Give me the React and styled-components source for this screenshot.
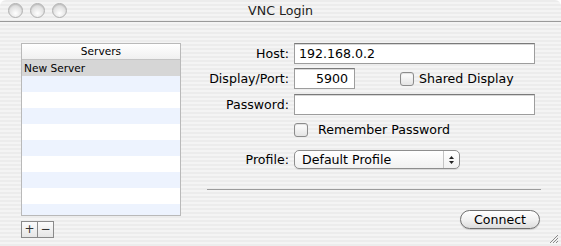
import React from 'react';
import styled, { createGlobalStyle } from 'styled-components';

const GlobalStyle = createGlobalStyle`
  html, body {
    margin: 0;
    padding: 0;
    background: #ffffff;
  }
  body {
    font-family: "DejaVu Sans", "Liberation Sans", sans-serif;
    color: #000;
  }
`;

const pinstripe = `repeating-linear-gradient(
  to bottom,
  #ececec 0px,
  #ececec 2px,
  #f4f4f4 2px,
  #f4f4f4 4px
)`;

const Window = styled.div`
  width: 561px;
  height: 246px;
  display: flex;
  flex-direction: column;
  border-radius: 6px 6px 0 0;
  overflow: hidden;
  background: ${pinstripe};
  position: relative;
`;

const TitleBar = styled.div`
  height: 21px;
  border-bottom: 1px solid #9a9a9a;
  display: flex;
  align-items: center;
  position: relative;
`;

const Lights = styled.div`
  display: flex;
  gap: 7px;
  padding-left: 8px;
`;

const Light = styled.span`
  width: 13px;
  height: 13px;
  border-radius: 50%;
  border: 1px solid #b0b0b0;
  background: radial-gradient(circle at 50% 72%, #ffffff 0%, #e8e8e8 45%, #cdcdcd 100%);
  box-shadow: inset 0 1px 1px rgba(0, 0, 0, 0.12);
`;

const Title = styled.div`
  position: absolute;
  left: 0;
  right: 0;
  text-align: center;
  font-size: 12.6px;
  color: #222;
`;

const Body = styled.div`
  flex: 1;
  display: flex;
  padding: 21px 20px 0 21px;
  gap: 26px;
`;

const LeftColumn = styled.div`
  width: 160px;
  display: flex;
  flex-direction: column;
  gap: 5px;
`;

const Table = styled.div`
  height: 171px;
  border: 1px solid #b9b9b9;
  background: #fff;
  display: flex;
  flex-direction: column;
  overflow: hidden;
`;

const TableHeader = styled.div`
  height: 15px;
  border-bottom: 1px solid #c4c4c4;
  background: linear-gradient(to bottom, #ffffff, #f0f0f0);
  font-size: 10.6px;
  text-align: center;
  line-height: 15px;
`;

const TableRow = styled.div`
  height: 16px;
  flex-shrink: 0;
  font-size: 10.6px;
  line-height: 16px;
  padding-left: 2px;
  background: ${(p) => (p.$selected ? '#d6d6d6' : p.$odd ? '#edf3fe' : '#ffffff')};
`;

const SmallButtons = styled.div`
  display: flex;
`;

const SmallButton = styled.div`
  width: 15px;
  height: 15px;
  border: 1px solid #8a8a8a;
  margin-left: ${(p) => (p.$first ? '0' : '-1px')};
  background: linear-gradient(to bottom, #fbfbfb, #e6e6e6);
  font-size: 12px;
  line-height: 14px;
  text-align: center;
  color: #333;
`;

const RightColumn = styled.div`
  flex: 1;
  display: flex;
  flex-direction: column;
`;

const Row = styled.div`
  display: flex;
  align-items: center;
  margin-top: ${(p) => p.$mt || 0}px;
`;

const Label = styled.label`
  width: 82px;
  margin-right: 5px;
  text-align: right;
  font-size: 12.6px;
  white-space: nowrap;
`;

const TextField = styled.div`
  box-sizing: border-box;
  width: ${(p) => p.$w}px;
  height: 21px;
  border: 1px solid #9d9d9d;
  border-top-color: #7a7a7a;
  background: #fff;
  font-size: 12.6px;
  line-height: 19px;
  padding: 0 6px 0 4px;
  text-align: ${(p) => p.$align || 'left'};
  box-shadow: inset 0 1px 0 #d8d8d8;
`;

const CheckGroup = styled.div`
  display: flex;
  align-items: center;
  gap: ${(p) => p.$gap}px;
  margin-left: ${(p) => p.$ml || 0}px;
  font-size: 12.6px;
`;

const Checkbox = styled.span`
  box-sizing: border-box;
  width: 14px;
  height: 14px;
  border: 1px solid #8c8c8c;
  border-radius: 3px;
  background: linear-gradient(to bottom, #ffffff, #e4e4e4);
  box-shadow: inset 0 1px 1px rgba(0, 0, 0, 0.12);
`;

const Popup = styled.div`
  box-sizing: border-box;
  width: 166px;
  height: 19px;
  border: 1px solid #8e8e8e;
  border-radius: 5px;
  background: linear-gradient(to bottom, #ffffff, #f1f1f1);
  display: flex;
  align-items: center;
  font-size: 12.6px;
  box-shadow: 0 1px 0 rgba(0, 0, 0, 0.08);
`;

const PopupText = styled.span`
  flex: 1;
  padding-left: 7px;
`;

const PopupArrows = styled.span`
  width: 15px;
  height: 100%;
  border-left: 1px solid #c4c4c4;
  display: flex;
  flex-direction: column;
  align-items: center;
  justify-content: center;
  gap: 2px;
`;

const Separator = styled.div`
  height: 1px;
  background: #9c9c9c;
  margin-top: 20px;
`;

const Footer = styled.div`
  display: flex;
  justify-content: flex-end;
  margin-top: 20px;
  padding-right: 1px;
`;

const PillButton = styled.div`
  box-sizing: border-box;
  width: 80px;
  height: 19px;
  border: 1px solid #6f6f6f;
  border-radius: 10px;
  background: linear-gradient(to bottom, #ffffff 0%, #f2f2f2 50%, #dcdcdc 100%);
  font-size: 12.6px;
  line-height: 17px;
  text-align: center;
  box-shadow: 0 1px 1px rgba(0, 0, 0, 0.15);
`;

const Grip = styled.svg`
  position: absolute;
  right: 2px;
  bottom: 2px;
`;

const rows = Array.from({ length: 10 }, (_, i) => i);

export default function App() {
  return (
    <>
      <GlobalStyle />
      <Window>
        <TitleBar>
          <Lights>
            <Light />
            <Light />
            <Light />
          </Lights>
          <Title>VNC Login</Title>
        </TitleBar>
        <Body>
          <LeftColumn>
            <Table>
              <TableHeader>Servers</TableHeader>
              {rows.map((i) => (
                <TableRow key={i} $selected={i === 0} $odd={i % 2 === 1}>
                  {i === 0 ? 'New Server' : ''}
                </TableRow>
              ))}
            </Table>
            <SmallButtons>
              <SmallButton $first>+</SmallButton>
              <SmallButton>−</SmallButton>
            </SmallButtons>
          </LeftColumn>
          <RightColumn>
            <Row>
              <Label>Host:</Label>
              <TextField $w={241}>192.168.0.2</TextField>
            </Row>
            <Row $mt={4}>
              <Label>Display/Port:</Label>
              <TextField $w={61} $align="right">5900</TextField>
              <CheckGroup $gap={5} $ml={45}>
                <Checkbox />
                <span>Shared Display</span>
              </CheckGroup>
            </Row>
            <Row $mt={5}>
              <Label>Password:</Label>
              <TextField $w={241} />
            </Row>
            <Row $mt={7}>
              <Label />
              <CheckGroup $gap={10}>
                <Checkbox />
                <span>Remember Password</span>
              </CheckGroup>
            </Row>
            <Row $mt={13}>
              <Label>Profile:</Label>
              <Popup>
                <PopupText>Default Profile</PopupText>
                <PopupArrows>
                  <svg width="5" height="3" viewBox="0 0 5 3">
                    <path d="M2.5 0 L5 3 L0 3 Z" fill="#222" />
                  </svg>
                  <svg width="5" height="3" viewBox="0 0 5 3">
                    <path d="M0 0 L5 0 L2.5 3 Z" fill="#222" />
                  </svg>
                </PopupArrows>
              </Popup>
            </Row>
            <Separator />
            <Footer>
              <PillButton>Connect</PillButton>
            </Footer>
          </RightColumn>
        </Body>
        <Grip width="12" height="12" viewBox="0 0 12 12">
          <path d="M11 3 L3 11 M11 6 L6 11 M11 9 L9 11" stroke="#8a8a8a" strokeWidth="1" />
        </Grip>
      </Window>
    </>
  );
}
